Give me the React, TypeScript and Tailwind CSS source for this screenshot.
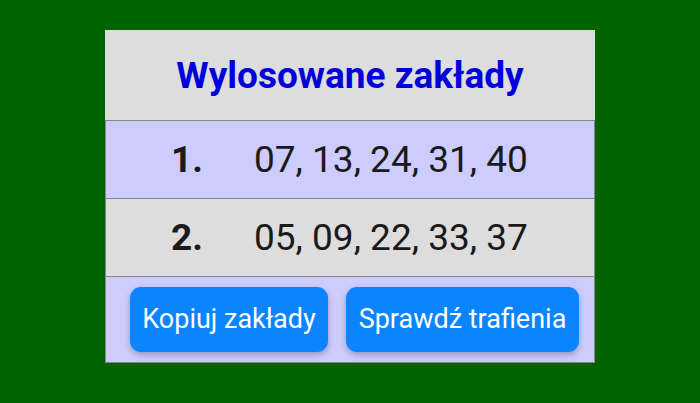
const bets = [
  { no: '1.', nums: '07, 13, 24, 31, 40', bg: 'bg-[#ccccff]' },
  { no: '2.', nums: '05, 09, 22, 33, 37', bg: 'bg-[#dddddd]' },
];

export default function App() {
  return (
    <div className="w-[700px] h-[403px] bg-[#006400] pt-[30px] font-['Roboto',sans-serif]">
      <div className="mx-auto w-[490px] bg-[#dddddd]">
        <div className="h-[91px] flex items-center justify-center">
          <h1 className="text-[37px] font-bold text-[#0000dd] leading-none">Wylosowane zakłady</h1>
        </div>
        {bets.map((b) => (
          <div
            key={b.no}
            className={`h-[79px] flex items-center border border-[#888888] -mt-px first:mt-0 ${b.bg} text-[#1a1a1a]`}
          >
            <span className="w-[148px] pl-[65px] text-[37px] font-bold leading-none">{b.no}</span>
            <span className="text-[37px] leading-none">{b.nums}</span>
          </div>
        ))}
        <div className="h-[87px] -mt-px border border-[#888888] bg-[#ccccff] flex items-center gap-[18px] pl-[24px]">
          <button className="w-[198px] h-[65px] rounded-[11px] bg-[#0a84ff] text-white text-[27px] shadow-[0_3px_6px_rgba(0,0,0,0.25)]">
            Kopiuj zakłady
          </button>
          <button className="w-[233px] h-[65px] rounded-[11px] bg-[#0a84ff] text-white text-[27px] shadow-[0_3px_6px_rgba(0,0,0,0.25)]">
            Sprawdź trafienia
          </button>
        </div>
      </div>
    </div>
  );
}
